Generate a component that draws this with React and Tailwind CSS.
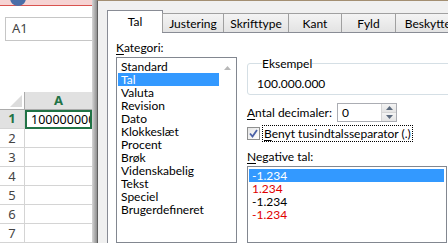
import { Fragment } from 'react'

const categories = [
  'Standard', 'Tal', 'Valuta', 'Revision', 'Dato', 'Klokkeslæt', 'Procent',
  'Brøk', 'Videnskabelig', 'Tekst', 'Speciel', 'Brugerdefineret',
]

const negatives = [
  { text: '-1.234', color: 'text-white', selected: true },
  { text: '1.234', color: 'text-[#e00000]' },
  { text: '-1.234', color: 'text-black' },
  { text: '-1.234', color: 'text-[#e00000]' },
]

const tabs = [
  { label: 'Tal', w: 'w-[56px]', active: true },
  { label: 'Justering', w: 'w-[62px]' },
  { label: 'Skrifttype', w: 'w-[66px]' },
  { label: 'Kant', w: 'w-[54px]' },
  { label: 'Fyld', w: 'w-[55px]' },
  { label: 'Beskyttelse', w: 'w-[80px]' },
]

function Sheet() {
  return (
    <div className="relative flex w-[92px] shrink-0 flex-col overflow-hidden bg-white font-['Noto_Sans',sans-serif]">
      {/* top strip */}
      <div className="h-[6px] border-b border-[#d9534f] bg-[#f6d3d3]" />
      <div className="absolute left-[10px] top-[-10px] h-[16px] w-[16px] rounded-full bg-[#4a6ea8]" />

      {/* name box */}
      <div className="ml-[5px] mt-[11px] flex h-[25px] w-[110px] items-center border border-[#c6c6c6] pl-[6px] text-[13px] text-[#444]">
        A1
      </div>

      {/* column header */}
      <div className="mt-[51px] flex h-[19px]">
        <div className="flex w-[25px] items-end justify-end border-r border-b border-[#ababab] bg-white pb-[2px] pr-[2px]">
          <svg width="12" height="12" viewBox="0 0 12 12">
            <polygon points="12,0 12,12 0,12" fill="#dcdcdc" />
          </svg>
        </div>
        <div className="flex flex-1 items-center justify-center border-b border-[#ababab] bg-[#e1e1e1] text-[13px] font-bold text-[#217346]">
          A
        </div>
      </div>

      {/* rows */}
      {[1, 2, 3, 4, 5, 6, 7].map((n) => (
        <div key={n} className={`flex ${n === 1 ? 'h-[21px]' : 'h-[20px]'}`}>
          <div
            className={`flex w-[25px] items-center justify-center border-r border-b border-[#d4d4d4] text-[13px] ${
              n === 1 ? 'bg-[#e1e1e1] font-bold text-[#217346]' : 'text-[#444]'
            }`}
          >
            {n}
          </div>
          {n === 1 ? (
            <div className="flex flex-1 items-center overflow-hidden whitespace-nowrap border-2 border-[#217346] pl-[4px] text-[12.5px] text-black">
              100000000
            </div>
          ) : (
            <div className="flex-1 border-b border-[#d4d4d4]" />
          )}
        </div>
      ))}
    </div>
  )
}

function Ul({ children }) {
  return <span className="underline underline-offset-2">{children}</span>
}

export default function App() {
  return (
    <div className="flex h-[243px] w-[448px] overflow-hidden bg-white font-['Lato',sans-serif] text-[12px] leading-[13px] text-black">
      <Sheet />

      {/* dialog shadow */}
      <div className="w-[5px] shrink-0 bg-gradient-to-r from-[#d6d6d6] to-[#8f8f8f]" />

      {/* dialog */}
      <div className="flex min-w-0 flex-1 flex-col border-l border-t border-l-[#5f5f5f] border-t-[#a38f72] bg-[#f0f0f0]">
        {/* tabs */}
        <div className="relative z-10 flex h-[31px] shrink-0 items-end pl-[9px]">
          {tabs.map((t) =>
            t.active ? (
              <div
                key={t.label}
                className={`${t.w} -mb-px flex h-[23px] shrink-0 items-center justify-center border border-b-0 border-[#898c95] bg-white pb-[2px]`}
              >
                {t.label}
              </div>
            ) : (
              <div
                key={t.label}
                className={`${t.w} -ml-px flex h-[19px] shrink-0 items-center justify-center border border-b-0 border-[#a0a0a0] bg-gradient-to-b from-[#f4f4f4] to-[#e3e3e3] pt-px first:ml-0`}
              >
                {t.label}
              </div>
            ),
          )}
        </div>

        {/* panel */}
        <div className="ml-[9px] flex flex-1 border-l border-t border-[#898c95] bg-white pl-[8px]">
          {/* left column */}
          <div className="flex w-[121px] shrink-0 flex-col pt-[8px]">
            <div>
              <Ul>K</Ul>ategori:
            </div>
            <div className="mt-[3px] flex flex-1 border border-[#828790]">
              <div className="flex-1 pl-px pt-[2px]">
                {categories.map((c) => (
                  <div
                    key={c}
                    className={`h-[13px] pl-[3px] ${c === 'Tal' ? 'bg-[#3399ff] text-white' : ''}`}
                  >
                    {c}
                  </div>
                ))}
              </div>
              <div className="flex w-[17px] justify-center pt-[8px]">
                <svg width="7" height="4" viewBox="0 0 7 4">
                  <polygon points="3.5,0 7,4 0,4" fill="#b8b8b8" />
                </svg>
              </div>
            </div>
          </div>

          {/* right column */}
          <div className="ml-[10px] flex min-w-0 flex-1 flex-col pt-[24px]">
            <fieldset className="w-[220px] rounded-[3px] border border-[#d5dfe5] pb-[4px] pl-[9px]">
              <legend className="ml-[5px] px-0">Eksempel</legend>
              <div className="pt-[7px]">100.000.000</div>
            </fieldset>

            <div className="mt-[8px] flex items-center">
              <div className="w-[90px]">
                <Ul>A</Ul>ntal decimaler:
              </div>
              <div className="flex h-[19px] w-[60px] border border-[#abadb3]">
                <div className="flex flex-1 items-center pl-[4px]">0</div>
                <div className="flex w-[15px] flex-col border-l border-[#d5d5d5]">
                  <div className="flex flex-1 items-center justify-center bg-gradient-to-b from-[#f4f4f4] to-[#e4e4e4]">
                    <svg width="7" height="4" viewBox="0 0 7 4">
                      <polygon points="3.5,0 7,4 0,4" fill="#5d6b7e" />
                    </svg>
                  </div>
                  <div className="flex flex-1 items-center justify-center border-t border-[#d5d5d5] bg-gradient-to-b from-[#f4f4f4] to-[#e4e4e4]">
                    <svg width="7" height="4" viewBox="0 0 7 4">
                      <polygon points="0,0 7,0 3.5,4" fill="#5d6b7e" />
                    </svg>
                  </div>
                </div>
              </div>
            </div>

            <div className="mt-[3px] flex items-center">
              <div className="flex h-[13px] w-[13px] items-center justify-center border border-[#8e8f8f] bg-gradient-to-br from-[#e6e6e6] to-white">
                <svg width="9" height="9" viewBox="0 0 9 9">
                  <path d="M1 4.5 L3.5 7.5 L8 1" fill="none" stroke="#4b61a7" strokeWidth="1.8" />
                </svg>
              </div>
              <div className="ml-[2px] border border-dotted border-black px-px py-px">
                <Ul>B</Ul>enyt tusindtalsseparator (.)
              </div>
            </div>

            <div className="mt-[8px]">
              <Ul>N</Ul>egative tal:
            </div>
            <div className="mr-[1px] mt-[3px] flex-1 border border-[#828790] pl-px pr-[2px] pt-[2px]">
              {negatives.map((n, i) => (
                <Fragment key={i}>
                  <div className={`h-[13px] pl-[3px] ${n.color} ${n.selected ? 'bg-[#3399ff]' : ''}`}>
                    {n.text}
                  </div>
                </Fragment>
              ))}
            </div>
          </div>
        </div>
      </div>
    </div>
  )
}
